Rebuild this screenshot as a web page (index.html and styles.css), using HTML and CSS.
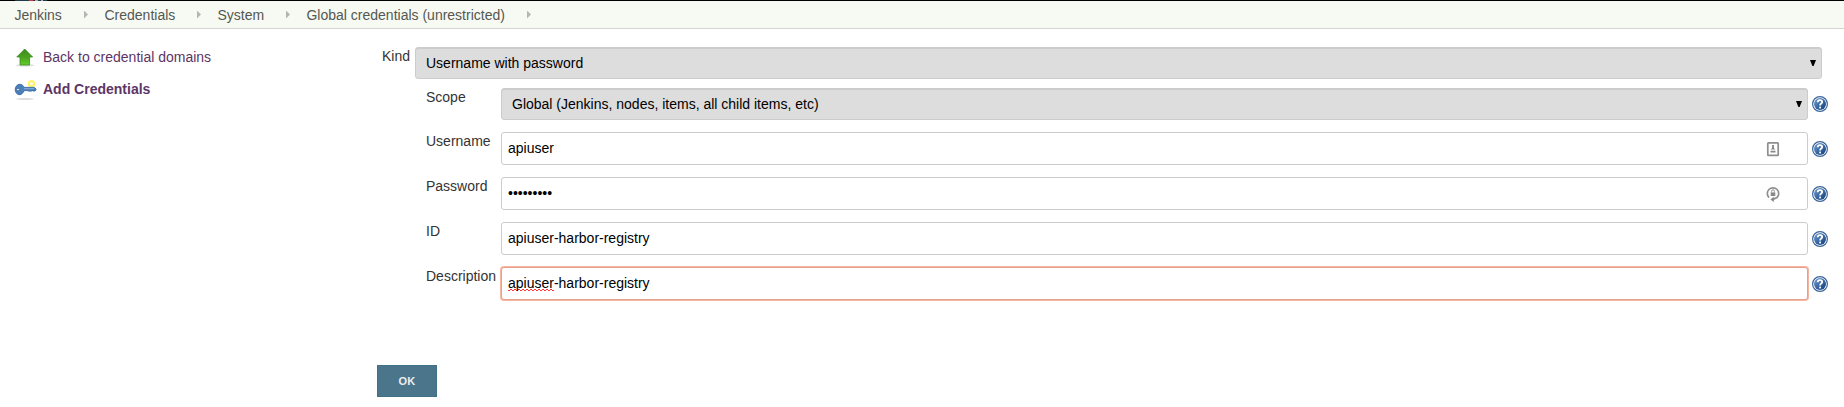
FILE: index.html
```html
<!DOCTYPE html>
<html lang="en">
<head>
<meta charset="utf-8">
<title>Add Credentials [Jenkins]</title>
<link rel="stylesheet" href="styles.css">
</head>
<body>
<svg width="0" height="0" class="defs">
  <defs>
    <linearGradient id="blue" x1="0" y1="0" x2="1" y2="1"><stop offset="0" stop-color="#79a3cf"/><stop offset=".5" stop-color="#3a6aa5"/><stop offset="1" stop-color="#0f3c7a"/></linearGradient>
    <linearGradient id="green" x1="0" y1="0" x2="0" y2="1"><stop offset="0" stop-color="#3f8a1c"/><stop offset=".5" stop-color="#4aa01f"/><stop offset="1" stop-color="#62d02a"/></linearGradient>
    <symbol id="help" viewBox="0 0 16 16">
      <circle cx="8" cy="8" r="7.4" fill="#fff" stroke="#3b659a" stroke-width="1.2"/>
      <circle cx="8" cy="8" r="6" fill="url(#blue)"/>
      <path d="M5.7 6.2Q5.8 4.1 8 4.1T10.2 6C10.2 7.6 8.1 7.5 8.1 9.4" fill="none" stroke="#fff" stroke-width="1.8"/>
      <rect x="7.2" y="10.6" width="1.8" height="1.8" fill="#fff"/>
    </symbol>
  </defs>
</svg>
<header class="topline"><svg width="32" height="1"><path d="M0 0H32V1H0z" fill="#213b4d"/><path d="M14 0h4v1h-4z" fill="#d33833"/><path d="M20 0h3v1h-3zM26 0h2v1h-2z" fill="#aaa"/></svg></header>
<nav class="crumbs">
  <a class="c1">Jenkins</a><i></i><a class="c2">Credentials</a><i></i><a class="c3">System</a><i></i><a class="c4">Global credentials (unrestricted)</a><i></i>
</nav>
<div class="page">
  <aside class="tasks">
    <div class="task">
      <svg width="24" height="24" viewBox="0 0 24 24">
        <ellipse cx="11" cy="20.4" rx="9" ry="1.1" fill="#ddd"/>
        <path d="M10.7 4L18.6 12H15.6V20H6V12H2.8z" fill="url(#green)" stroke="#3c8c20" stroke-width=".8"/>
      </svg>
      <a>Back to credential domains</a>
    </div>
    <div class="task current">
      <svg width="24" height="24" viewBox="0 0 24 24">
        <ellipse cx="11" cy="22" rx="9" ry=".9" fill="#ddd"/>
        <circle cx="17.5" cy="6.7" r="3.7" fill="#fff36b"/><circle cx="17.5" cy="6.7" r="1.6" fill="#fffce0"/>
        <path d="M5.8 7.3C8 7.3 9.4 8.7 10 10.4H20.4L22.2 12.2 21 14H19L18 13.4 17 14.6 16 13.4 15 14.6 14 13.6H10C9.2 16 7.7 17.7 5.6 17.7 3 17.7 1.2 15.4 1.2 12.6S3.1 7.3 5.8 7.3z" fill="#4b80bb" stroke="#2c60a0" stroke-width=".8"/>
        <circle cx="4" cy="12.6" r="1.3" fill="#fff" stroke="#28558f" stroke-width=".7"/>
        <path d="M10 11.7H20" stroke="#88b2df"/>
      </svg>
      <a>Add Credentials</a>
    </div>
  </aside>
  <main class="form">
    <div class="kind"><label>Kind</label><div class="select"><span>Username with password</span><b></b></div></div>
    <div class="row scope"><label>Scope</label><div class="select"><span>Global (Jenkins, nodes, items, all child items, etc)</span><b></b></div><svg class="help"><use href="#help"/></svg></div>
    <div class="row"><label>Username</label><div class="input"><span>apiuser</span>
      <svg class="fill" width="14" height="16" viewBox="0 0 14 16"><rect x="1.8" y="1.8" width="10.4" height="12.6" rx=".7" fill="#fff" stroke="#8e8e8e" stroke-width="1.7"/><circle cx="7" cy="5" r="1.1" fill="#777"/><path d="M6 6h2v1.2L9.5 8.5h-5L6 7.2zM4.5 9.7h5v1.8h-5z" fill="#888"/></svg></div><svg class="help"><use href="#help"/></svg></div>
    <div class="row"><label>Password</label><div class="input"><span class="dots">•••••••••</span>
      <svg class="fill" width="14" height="16" viewBox="0 0 14 16"><path d="M3 11.6A5.7 5.7 0 1 1 11 11.6L7 13.4" fill="none" stroke="#8e8e8e" stroke-width="1.7"/><path d="M7.8 10.8v5.2L4.4 13.4z" fill="#888"/><rect x="4.7" y="6.4" width="4.6" height="3.6" fill="#888"/><path d="M5.6 6.4V5.2a1.4 1.4 0 0 1 2.8 0V6.4" fill="none" stroke="#888" stroke-width=".9"/></svg></div><svg class="help"><use href="#help"/></svg></div>
    <div class="row"><label>ID</label><div class="input"><span>apiuser-harbor-registry</span></div><svg class="help"><use href="#help"/></svg></div>
    <div class="row"><label>Description</label><div class="input focus"><span><u>apiuser</u>-harbor-registry</span></div><svg class="help"><use href="#help"/></svg></div>
    <button class="ok">OK</button>
  </main>
</div>
</body>
</html>
```
FILE: styles.css
```css
* { box-sizing: border-box; }
body { margin: 0; background: #fff; color: #333; font: 14px/18px "Liberation Sans", Arial, sans-serif; }
svg { flex: none; display: block; }
.defs { position: absolute; }
.topline { height: 1px; background: #000; padding-left: 15px; }
.crumbs { height: 28px; display: flex; align-items: center; padding-left: 14.4px; background: #f6faf2; border-bottom: 1px solid #d3d7cf; color: #555753; white-space: nowrap; }
.crumbs i { width: 4px; height: 8px; background: #b4b6b3; clip-path: polygon(0 0, 100% 50%, 0 100%); margin-right: 16.5px; flex: none; }
.c1 { width: 69.6px; }
.c2 { width: 92.5px; }
.c3 { width: 68.5px; }
.c4 { width: 220.5px; }
.page { display: flex; }
.tasks { width: 377px; padding: 16px 0 0 14px; }
.task { display: flex; align-items: center; height: 24px; margin-bottom: 8px; color: #5c3566; }
.task a { margin-left: 5px; }
.current { font-weight: bold; }
.form { width: 1451px; padding-top: 18px; }
.kind { display: flex; margin-bottom: 9px; padding-left: 5px; width: 1445px; }
.kind label { width: 33px; }
.row { display: flex; align-items: flex-start; height: 45px; padding-left: 49px; }
.scope { height: 44px; }
.row label { width: 75px; flex: none; }
.select, .input { flex: 1; display: flex; align-items: center; justify-content: space-between; border: 1px solid #ccc; border-radius: 3px; color: #000; }
.select { height: 32px; background: #ddd; padding: 0 5px 0 10px; box-shadow: inset 0 1px #ccc; }
.select b { width: 6px; height: 6px; background: #000; clip-path: polygon(0 0, 100% 0, 60% 100%, 40% 100%); }
.input { height: 33px; padding: 0 27px 0 6px; background: #fff; }
.input span { padding-bottom: 2px; }
.input .dots { padding-bottom: 1px; }
.focus { border-color: #e5a18c; box-shadow: 0 0 0 1px #f6b5a0; }
.focus u {
  text-decoration: none;
  background:
    repeating-linear-gradient(90deg, #f33 0 2px, transparent 2px 4px) 0 100% / 100% 1px no-repeat,
    repeating-linear-gradient(90deg, transparent 0 2px, #f33 2px 4px) 0 calc(100% - 1px) / 100% 1px no-repeat;
}
.help { width: 16px; height: 16px; margin: 9px 0 0 4px; }
.scope .help { margin-top: 8px; }
.ok { display: block; width: 60px; height: 32px; margin-top: 53px; padding: 0; border: 1px solid #407287; background: #4b758b; color: #eee; font: bold 11px "Liberation Sans", Arial, sans-serif; letter-spacing: .3px; }
```
